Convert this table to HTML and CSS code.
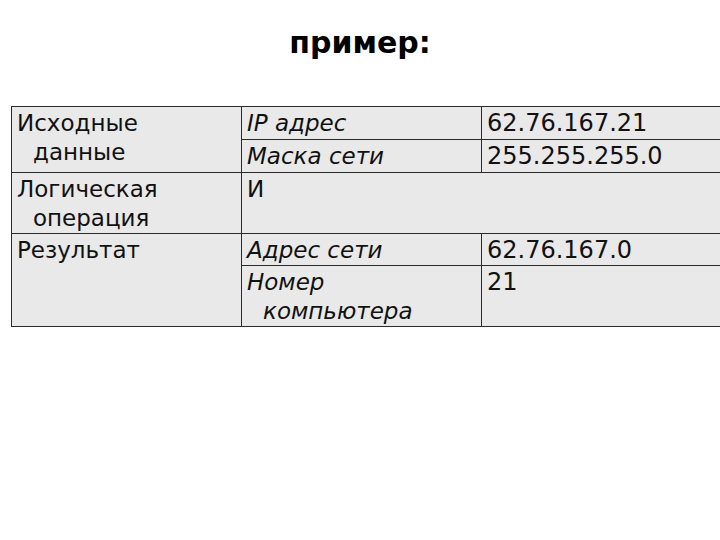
FILE: index.html
```html
<!DOCTYPE html>
<html lang="ru">
<head>
<meta charset="utf-8">
<title>пример</title>
<link rel="stylesheet" href="styles.css">
</head>
<body>
<h1 class="title">пример:</h1>
<table class="grid">
  <colgroup>
    <col class="c1">
    <col class="c2">
    <col class="c3">
  </colgroup>
  <tr class="r1">
    <td rowspan="2" class="hang">Исходные данные</td>
    <td class="it hang">IP адрес</td>
    <td class="num">62.76.167.21</td>
  </tr>
  <tr class="r2">
    <td class="it hang">Маска сети</td>
    <td class="num">255.255.255.0</td>
  </tr>
  <tr class="r3">
    <td class="hang">Логическая операция</td>
    <td colspan="2" class="hang">И</td>
  </tr>
  <tr class="r4">
    <td rowspan="2" class="hang">Результат</td>
    <td class="it hang">Адрес сети</td>
    <td class="num">62.76.167.0</td>
  </tr>
  <tr class="r5">
    <td class="it hang">Номер компьютера</td>
    <td class="num">21</td>
  </tr>
</table>
</body>
</html>
```
FILE: styles.css
```css
html, body {
  margin: 0;
  padding: 0;
  background: #ffffff;
  overflow: hidden;
  width: 720px;
  height: 540px;
}
.title {
  margin: 0;
  padding-top: 23px;
  height: 106px;
  box-sizing: border-box;
  text-align: center;
  font-family: "DejaVu Sans", Verdana, sans-serif;
  font-weight: bold;
  font-size: 30px;
  line-height: 40px;
  color: #000;
}
.grid {
  margin-left: 11px;
  border-collapse: collapse;
  table-layout: fixed;
  width: 709px;
  font-family: "DejaVu Sans", Verdana, sans-serif;
  font-size: 23px;
  line-height: 29px;
  color: #111;
  background: #e9e9e9;
}
.c1 { width: 230px; }
.c2 { width: 240px; }
.c3 { width: 239px; }
.grid td {
  border: 1px solid #2a2a2a;
  vertical-align: top;
  padding: 2px 4px 0 5px;
  white-space: nowrap;
}
.grid td.hang {
  white-space: normal;
  padding-left: 21px;
  text-indent: -16px;
}
.grid td.num {
  font-size: 24px;
  border-right: none;
}
.grid td[colspan] {
  border-right: none;
}
.it { font-style: italic; }
.r1 { height: 33px; }
.r2 { height: 33px; }
.r3 { height: 61px; }
.r4 { height: 32px; }
.r5 { height: 61px; }
```
